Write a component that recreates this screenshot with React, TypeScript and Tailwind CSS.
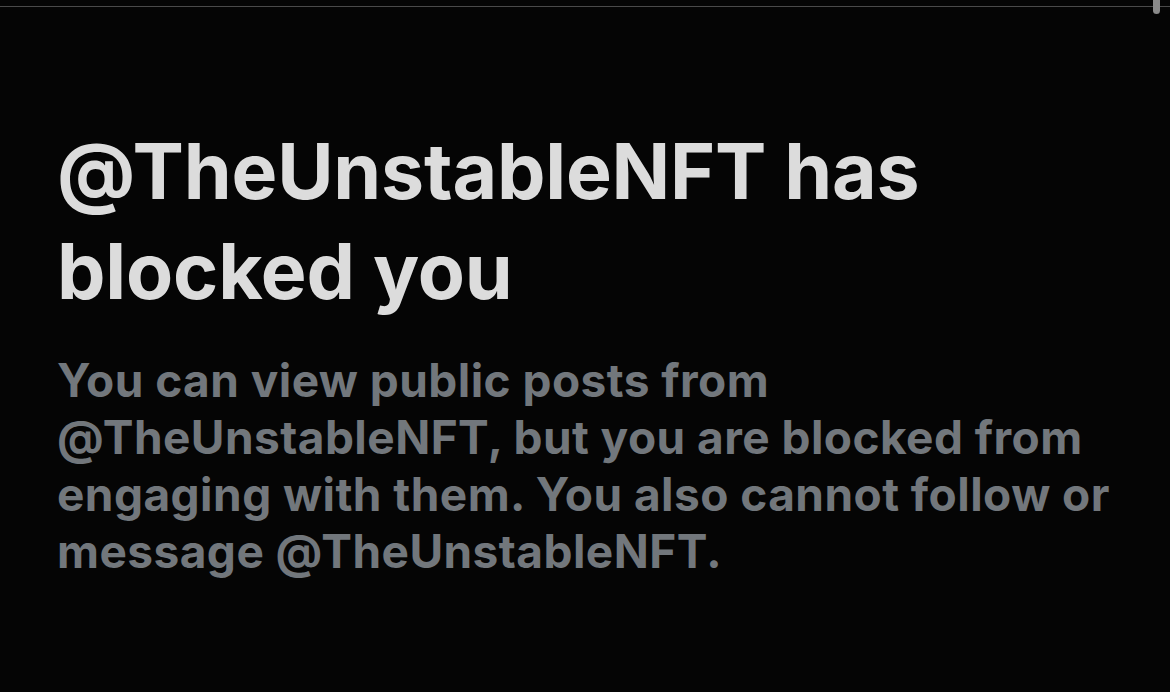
export default function App() {
  return (
    <div className="relative h-[692px] w-[1170px] overflow-hidden bg-[#050505] font-['Inter',sans-serif]">
      {/* top divider + scrollbar thumb */}
      <div className="mt-[6px] h-px w-full bg-[#4a4a4a]" />
      <div className="absolute right-[10px] top-0 h-[14px] w-[7px] rounded-b-full bg-[#8a8a8a]" />

      <div className="px-[57px] pt-[114px]">
        <h1 className="text-[77px] font-bold leading-[100px] tracking-[-0.2px] text-[#dcdcdc]">
          @TheUnstableNFT has
          <br />
          blocked you
        </h1>
        <p className="mt-[31px] text-[46px] font-bold leading-[57px] tracking-[0.45px] text-[#72777c]">
          You can view public posts from
          <br />
          @TheUnstableNFT, but you are blocked from
          <br />
          engaging with them. You also cannot follow or
          <br />
          message @TheUnstableNFT.
        </p>
      </div>
    </div>
  );
}
